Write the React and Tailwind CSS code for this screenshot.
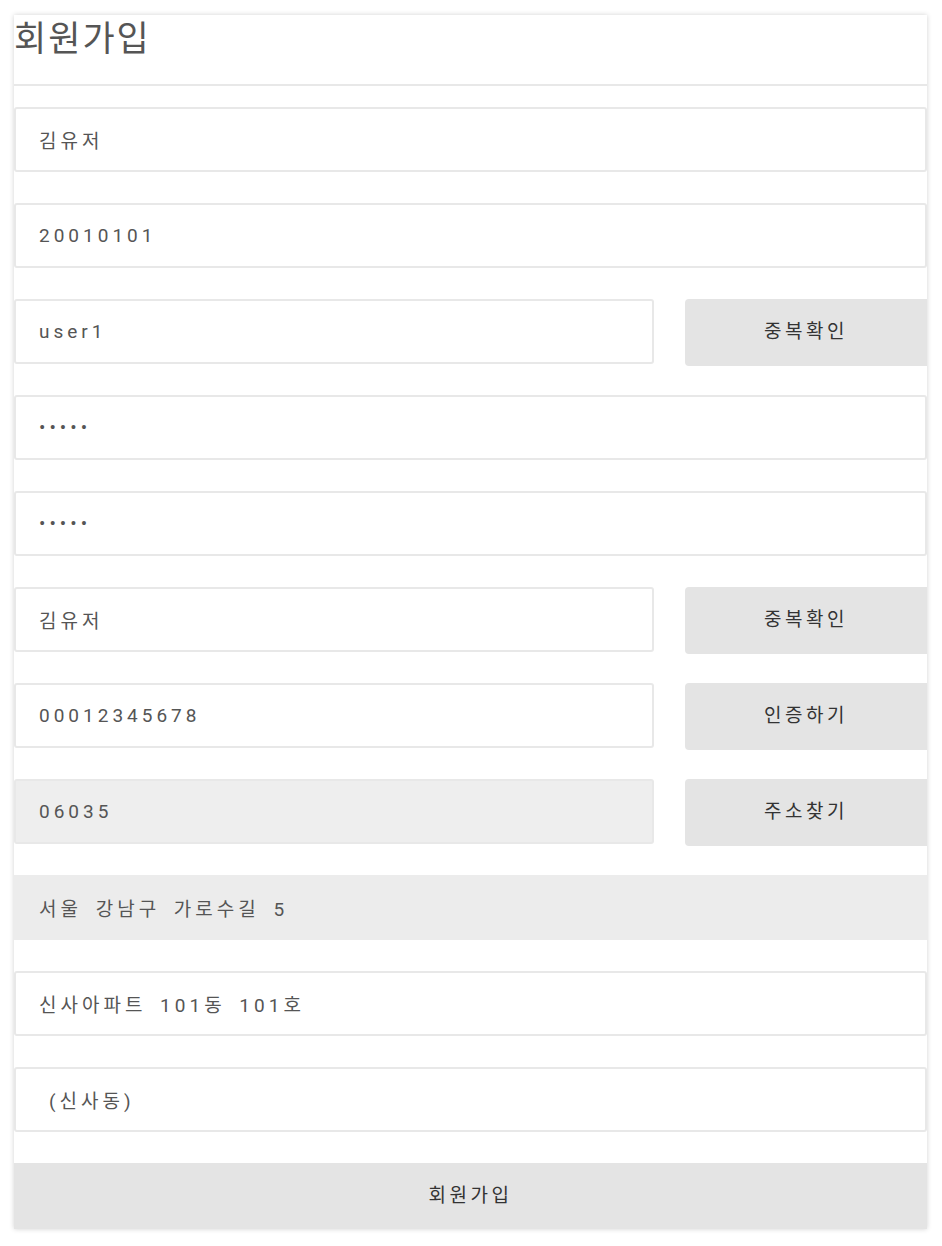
const inputBase =
  'h-[65px] rounded-[3px] border-2 border-[#e8e8e8] text-[19px] tracking-[4px] [word-spacing:5px] text-[#555] outline-none';

function Field({ value, type = 'text', gray = false, narrow = false, indent = false }) {
  return (
    <input
      type={type}
      readOnly
      defaultValue={value}
      className={`${inputBase} ${gray ? 'bg-[#eeeeee]' : 'bg-white'} ${narrow ? 'w-[640px]' : 'w-full'} ${indent ? 'pl-[33px]' : 'pl-[23px]'}`}
    />
  );
}

function Row({ value, label, gray }) {
  return (
    <div className="flex h-[65px] items-start gap-[31px]">
      <Field value={value} gray={gray} narrow />
      <button
        type="button"
        className="h-[67px] w-[242px] shrink-0 rounded-l-[4px] bg-[#e4e4e4] text-[19px] tracking-[3.5px] text-[#333]"
      >
        {label}
      </button>
    </div>
  );
}

export default function App() {
  return (
    <div className="min-h-[1246px] bg-white pt-[15px] pl-[14px] font-['Roboto','Noto_Sans_CJK_KR',sans-serif]">
      <div className="w-[913px] bg-white shadow-[0_0_5px_rgba(0,0,0,0.18)]">
        <h1 className="h-[71px] border-b-2 border-[#e8e8e8] text-[35px] leading-[50px] tracking-[2px] text-[#555]">
          회원가입
        </h1>
        <div className="flex flex-col gap-[31px] pt-[21px]">
          <Field value="김유저" />
          <Field value="20010101" />
          <Row value="user1" label="중복확인" />
          <Field value="12345" type="password" />
          <Field value="12345" type="password" />
          <Row value="김유저" label="중복확인" />
          <Row value="00012345678" label="인증하기" />
          <Row value="06035" label="주소찾기" gray />
          <input
            type="text"
            readOnly
            defaultValue="서울 강남구 가로수길 5"
            className="h-[65px] w-full bg-[#ececec] pl-[25px] text-[19px] tracking-[4px] [word-spacing:5px] text-[#555] outline-none"
          />
          <Field value="신사아파트 101동 101호" />
          <Field value="(신사동)" indent />
          <button
            type="button"
            className="h-[66px] w-full bg-[#e4e4e4] text-[19px] tracking-[3.5px] text-[#333]"
          >
            회원가입
          </button>
        </div>
      </div>
    </div>
  );
}
